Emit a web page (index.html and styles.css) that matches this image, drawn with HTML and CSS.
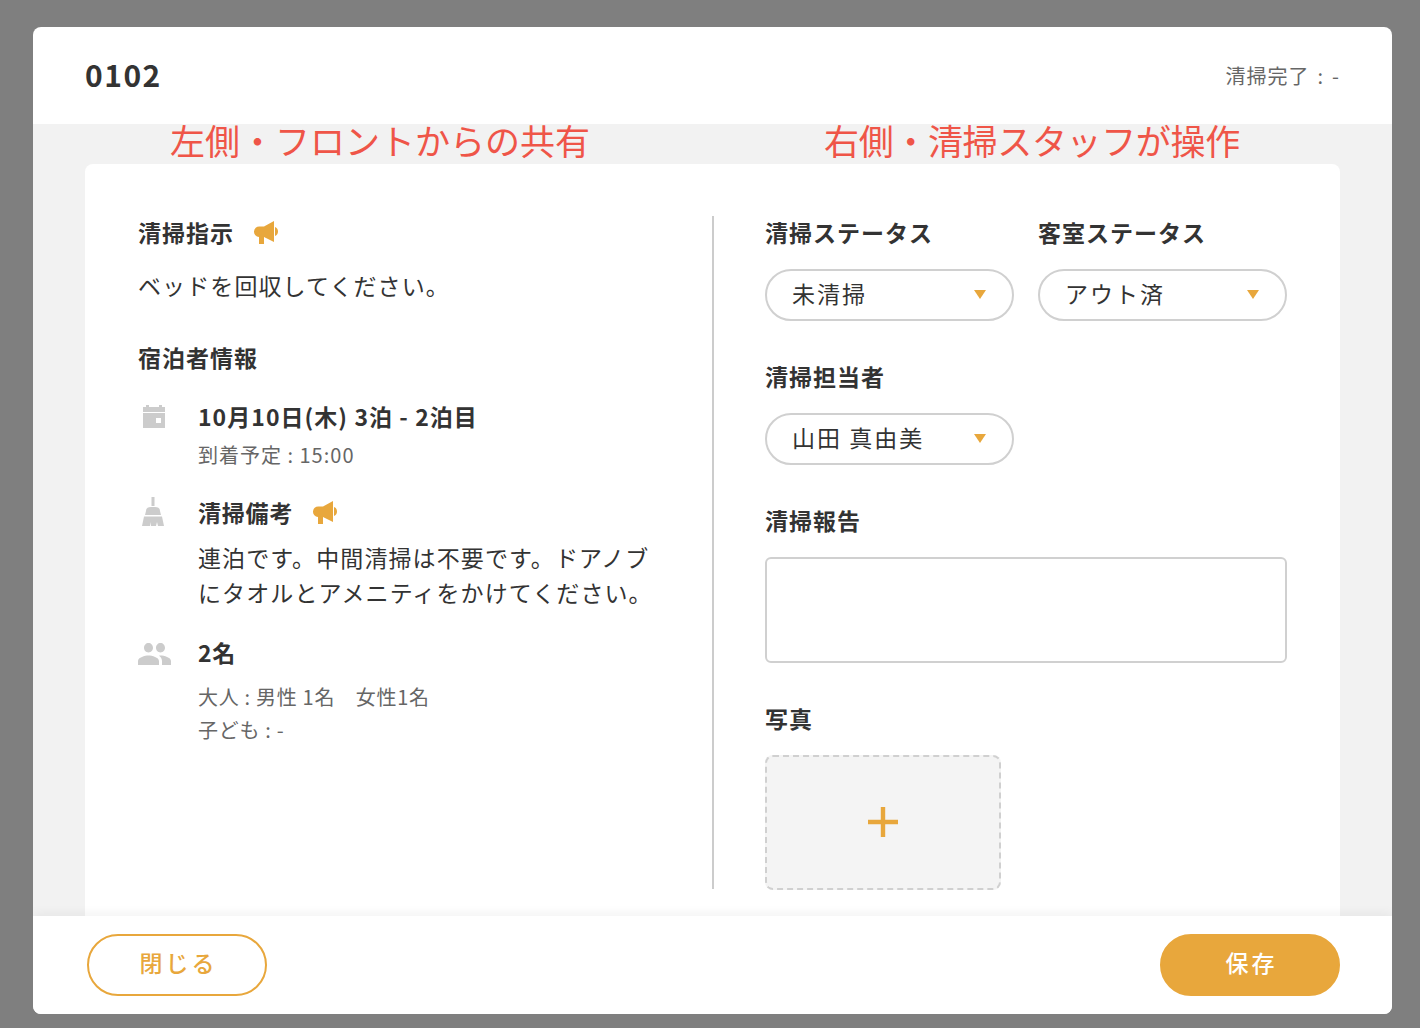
FILE: index.html
```html
<!DOCTYPE html>
<html lang="ja">
<head>
    <meta charset="UTF-8">
    <title>0102</title>
    <link rel="stylesheet" href="styles.css">
</head>
<body>
    <div class="overlay">
        <div class="modal">
            <header class="modal-header">
                <div class="room-no">0102</div>
                <div class="done-at">清掃完了 : -</div>
            </header>
            <div class="modal-body">
                <div class="notes">
                    <div class="note note-left">左側・フロントからの共有</div>
                    <div class="note note-right">右側・清掃スタッフが操作</div>
                </div>
                <div class="card">
                    <section class="col-left">
                        <h2 class="head">清掃指示
                            <svg class="horn" viewBox="0 0 24 23"><path d="M5.500 5.500H10L20 0v21l-10-5v7H5v-7a5.250 5.250 0 0 1 .5-10.500zM21 6c2 .5 3 2.500 3 4.500s-1 4-3 4.500z"/></svg>
                        </h2>
                        <p class="instruction">ベッドを回収してください。</p>
                        <h2 class="head head-guest">宿泊者情報</h2>

                        <div class="info info-date">
                            <svg class="info-icon icon-cal" viewBox="0 0 22 23"><path d="M3 0h3v2h10V0h3v2h3v5H0V2h3zM0 8h22v15H0zM13 13v5h5v-5z" fill-rule="evenodd"/></svg>
                            <div class="info-main">
                                <div class="info-title title-date">10月10日(木) 3泊 - 2泊目</div>
                                <div class="info-sub">到着予定 : 15:00</div>
                            </div>
                        </div>

                        <div class="info info-memo">
                            <svg class="info-icon icon-broom" viewBox="0 0 22 29"><path d="M9.500 0h3v9h-3zM4 14q0-4 5-4h4q5 0 5 4l1 4H3zM2 19.500h18l2 9.500h-6l-1-4-1 4H9v-4l-1 4H0z"/></svg>
                            <div class="info-main">
                                <div class="info-title">清掃備考
                                    <svg class="horn" viewBox="0 0 24 23"><path d="M5.500 5.500H10L20 0v21l-10-5v7H5v-7a5.250 5.250 0 0 1 .5-10.500zM21 6c2 .5 3 2.500 3 4.500s-1 4-3 4.500z"/></svg>
                                </div>
                                <p class="memo-text">連泊です。中間清掃は不要です。ドアノブにタオルとアメニティをかけてください。</p>
                            </div>
                        </div>

                        <div class="info info-people">
                            <svg class="info-icon icon-people" viewBox="1 5 22 14" preserveAspectRatio="none"><path d="M16 11c1.660 0 2.990-1.340 2.990-3S17.660 5 16 5c-1.660 0-3 1.340-3 3s1.340 3 3 3zm-8 0c1.660 0 2.990-1.340 2.990-3S9.660 5 8 5C6.340 5 5 6.340 5 8s1.340 3 3 3zm0 2c-2.330 0-7 1.170-7 3.500V19h14v-2.500c0-2.330-4.670-3.500-7-3.500zm8 0c-.290 0-.620.020-.970.050 1.160.840 1.970 1.970 1.970 3.450V19h6v-2.500c0-2.330-4.670-3.500-7-3.500z"/></svg>
                            <div class="info-main">
                                <div class="info-title">2名</div>
                                <div class="info-sub people-sub">大人 : 男性 1名　女性1名<br>子ども : -</div>
                            </div>
                        </div>
                    </section>

                    <section class="col-right">
                        <div class="select-row">
                            <div class="field">
                                <div class="head">清掃ステータス</div>
                                <div class="select">未清掃</div>
                            </div>
                            <div class="field">
                                <div class="head">客室ステータス</div>
                                <div class="select">アウト済</div>
                            </div>
                        </div>
                        <div class="field field-staff">
                            <div class="head">清掃担当者</div>
                            <div class="select">山田 真由美</div>
                        </div>
                        <div class="field field-report">
                            <div class="head">清掃報告</div>
                            <div class="report-box"></div>
                        </div>
                        <div class="field field-photo">
                            <div class="head">写真</div>
                            <div class="photo-add">
                                <svg class="plus" viewBox="0 0 30 30"><path d="M12.800 0h4.400v12.800H30v4.400H17.200V30h-4.400V17.200H0v-4.400h12.800z"/></svg>
                            </div>
                        </div>
                    </section>
                </div>
            </div>
            <footer class="modal-footer">
                <button class="btn btn-close">閉じる</button>
                <button class="btn btn-save">保存</button>
            </footer>
        </div>
    </div>
</body>
</html>
```

FILE: styles.css
```css
* {
    box-sizing: border-box;
}
body {
    margin: 0;
    font-family: "Noto Sans CJK JP", "Noto Sans", sans-serif;
    color: #333;
}
.overlay {
    height: 1028px;
    padding: 27px 28px 14px 33px;
    background-color: #7f7f7f;
    overflow: hidden;
}
.modal {
    display: flex;
    flex-direction: column;
    height: 100%;
    border-radius: 8px;
    background-color: #fff;
    overflow: hidden;
}
.modal-header {
    display: flex;
    justify-content: space-between;
    align-items: center;
    flex: none;
    height: 97px;
    padding: 0 52px;
}
.room-no {
    margin-bottom: 4px;
    font-size: 30px;
    font-weight: 700;
    letter-spacing: 1.5px;
}
.done-at {
    font-size: 20px;
    letter-spacing: 1px;
    word-spacing: 2.500px;
    color: #666;
}
.modal-body {
    display: flex;
    flex-direction: column;
    flex: 1;
    min-height: 0;
    padding: 0 52px;
    background-color: #f2f2f2;
}
.notes {
    display: flex;
    flex: none;
    height: 40px;
    font-size: 35px;
    line-height: 32px;
    color: #ef5548;
    white-space: nowrap;
}
.note-left {
    width: 739px;
    padding-left: 85px;
}
.note-right {
    letter-spacing: -.35px;
}
.card {
    display: grid;
    grid-template-columns: 576px 1fr;
    flex: 1;
    padding: 52px 53px 0;
    border-radius: 8px 8px 0 0;
    background-color: #fff;
}
.col-left {
    height: 673px;
    border-right: 2px solid #ccc;
}
.col-right {
    padding-left: 51px;
}
.head {
    margin: 0;
    height: 36px;
    font-size: 23px;
    font-weight: 700;
    line-height: 33px;
    letter-spacing: 1px;
}
.horn {
    width: 24px;
    height: 23px;
    margin-left: 14px;
    fill: #e8a73c;
    vertical-align: -2px;
}
.instruction {
    margin: 15px 0 0;
    font-size: 23px;
    line-height: 36px;
    letter-spacing: 1.1px;
}
.head-guest {
    margin-top: 38px;
}
.info {
    display: grid;
    grid-template-columns: 60px 455px;
}
.info-date {
    margin-top: 21px;
}
.info-date .info-sub {
    margin-top: 4px;
}
.info-memo {
    margin-top: 23px;
}
.info-people {
    margin-top: 24px;
}
.info-icon {
    fill: #ccc;
}
.icon-cal {
    width: 22px;
    height: 23px;
    margin: 7px 0 0 5px;
}
.icon-broom {
    width: 22px;
    height: 29px;
    margin: 3px 0 0 4px;
}
.icon-people {
    width: 33px;
    height: 22px;
    margin: 9px 0 0 0;
}
.info-title {
    height: 36px;
    font-size: 23px;
    font-weight: 700;
    line-height: 36px;
    letter-spacing: .8px;
}
.title-date {
    letter-spacing: 1.05px;
}
.info-sub {
    margin-top: 2px;
    font-size: 20px;
    line-height: 33px;
    letter-spacing: 1px;
    color: #666;
}
.people-sub {
    margin-top: 10px;
    letter-spacing: .7px;
}
.memo-text {
    margin: 10px 0 0;
    font-size: 23px;
    line-height: 35px;
    letter-spacing: 1.1px;
}
.select-row {
    display: flex;
    gap: 24px;
}
.field .select {
    margin-top: 17px;
}
.select {
    position: relative;
    width: 249px;
    height: 52px;
    padding-left: 25px;
    border: 2px solid #d0d0d0;
    border-radius: 26px;
    font-size: 23px;
    line-height: 44px;
    letter-spacing: 2px;
}
.select::after {
    content: "";
    position: absolute;
    right: 26px;
    top: 19px;
    border-left: 6.500px solid transparent;
    border-right: 6.500px solid transparent;
    border-top: 9px solid #e8a73c;
}
.field-staff {
    margin-top: 39px;
}
.field-report {
    margin-top: 39px;
}
.report-box {
    height: 106px;
    margin-top: 17px;
    border: 2px solid #d0d0d0;
    border-radius: 6px;
}
.field-photo {
    margin-top: 39px;
}
.photo-add {
    display: flex;
    justify-content: center;
    align-items: center;
    width: 236px;
    height: 135px;
    margin-top: 17px;
    border: 2px dashed #d0d0d0;
    border-radius: 8px;
    background-color: #f4f4f4;
}
.plus {
    width: 30px;
    height: 30px;
    margin-bottom: 2px;
    fill: #e8a73c;
}
.modal-footer {
    display: flex;
    justify-content: space-between;
    align-items: center;
    flex: none;
    position: relative;
    height: 98px;
    padding: 0 52px 0 54px;
    background-color: #fff;
    box-shadow: 0 -3px 10px rgba(0, 0, 0, .05);
}
.btn {
    width: 180px;
    height: 62px;
    padding: 0 0 7px 3px;
    border: 2px solid #e8a73c;
    border-radius: 31px;
    font-family: inherit;
    font-size: 23px;
    font-weight: 500;
    letter-spacing: 3px;
    color: #e8a73c;
    background-color: #fff;
}
.btn-save {
    color: #fff;
    background-color: #e8a73c;
}
```
